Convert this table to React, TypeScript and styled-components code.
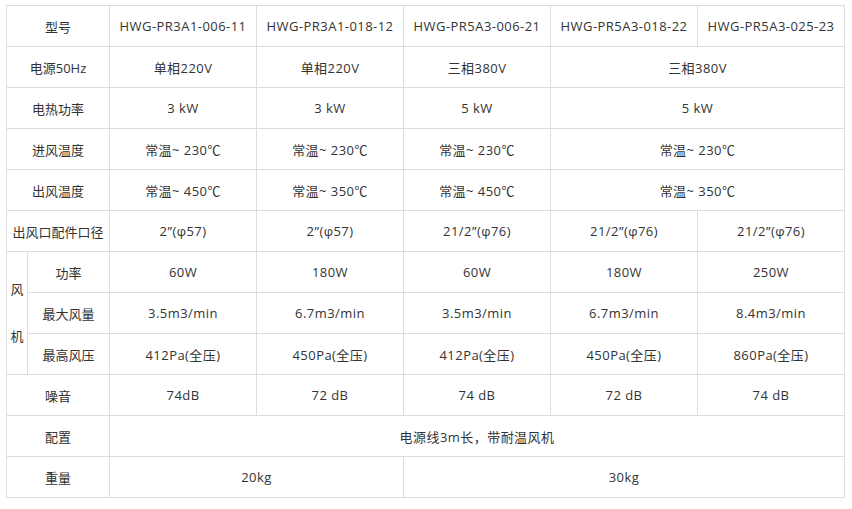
import React from "react";
import styled, { createGlobalStyle } from "styled-components";

const Global = createGlobalStyle`
  html, body { margin: 0; padding: 0; background: #fff; }
  body { font-family: "Open Sans", "Noto Sans CJK SC", sans-serif; }
`;

const Wrap = styled.div`
  padding: 5px 0 0 6px;
`;

const Table = styled.table`
  border-collapse: collapse;
  table-layout: fixed;
  width: 838px;
  font-size: 13px;
  color: #333;
  font-family: "Open Sans", "Noto Sans CJK SC", sans-serif;
`;

const Col = styled.col<{ $w: number }>`
  width: ${(p) => p.$w}px;
`;

const Row = styled.tr`
  height: 41px;
`;

const Cell = styled.td<{ $data?: boolean }>`
  border: 1px solid #ddd;
  text-align: center;
  vertical-align: middle;
  padding: 0;
  white-space: nowrap;
  letter-spacing: ${(p) => (p.$data ? "0.45px" : "0")};
`;

const VerticalLabel = styled.span`
  display: block;
  line-height: 47px;
`;

type R = { label: string; cells: { v: string; span?: number }[] };

const colWidths = [21, 82, 147, 147, 147, 147, 147];

const rows: R[] = [
  { label: "型号", cells: [{ v: "HWG-PR3A1-006-11" }, { v: "HWG-PR3A1-018-12" }, { v: "HWG-PR5A3-006-21" }, { v: "HWG-PR5A3-018-22" }, { v: "HWG-PR5A3-025-23" }] },
  { label: "电源50Hz", cells: [{ v: "单相220V" }, { v: "单相220V" }, { v: "三相380V" }, { v: "三相380V", span: 2 }] },
  { label: "电热功率", cells: [{ v: "3 kW" }, { v: "3 kW" }, { v: "5 kW" }, { v: "5 kW", span: 2 }] },
  { label: "进风温度", cells: [{ v: "常温~ 230℃" }, { v: "常温~ 230℃" }, { v: "常温~ 230℃" }, { v: "常温~ 230℃", span: 2 }] },
  { label: "出风温度", cells: [{ v: "常温~ 450℃" }, { v: "常温~ 350℃" }, { v: "常温~ 450℃" }, { v: "常温~ 350℃", span: 2 }] },
  { label: "出风口配件口径", cells: [{ v: "2\u201D(φ57)" }, { v: "2\u201D(φ57)" }, { v: "21/2\u201D(φ76)" }, { v: "21/2\u201D(φ76)" }, { v: "21/2\u201D(φ76)" }] },
];

const fanRows: R[] = [
  { label: "功率", cells: [{ v: "60W" }, { v: "180W" }, { v: "60W" }, { v: "180W" }, { v: "250W" }] },
  { label: "最大风量", cells: [{ v: "3.5m3/min" }, { v: "6.7m3/min" }, { v: "3.5m3/min" }, { v: "6.7m3/min" }, { v: "8.4m3/min" }] },
  { label: "最高风压", cells: [{ v: "412Pa(全压)" }, { v: "450Pa(全压)" }, { v: "412Pa(全压)" }, { v: "450Pa(全压)" }, { v: "860Pa(全压)" }] },
];

const tailRows: R[] = [
  { label: "噪音", cells: [{ v: "74dB" }, { v: "72 dB" }, { v: "74 dB" }, { v: "72 dB" }, { v: "74 dB" }] },
  { label: "配置", cells: [{ v: "电源线3m长，带耐温风机", span: 5 }] },
  { label: "重量", cells: [{ v: "20kg", span: 2 }, { v: "30kg", span: 3 }] },
];

const renderCells = (r: R) =>
  r.cells.map((c, i) => (
    <Cell key={i} colSpan={c.span} $data>
      {c.v}
    </Cell>
  ));

export default function App() {
  return (
    <>
      <Global />
      <Wrap>
        <Table>
          <colgroup>
            {colWidths.map((w, i) => (
              <Col key={i} $w={w} />
            ))}
          </colgroup>
          <tbody>
            {rows.map((r) => (
              <Row key={r.label}>
                <Cell colSpan={2}>{r.label}</Cell>
                {renderCells(r)}
              </Row>
            ))}
            {fanRows.map((r, i) => (
              <Row key={r.label}>
                {i === 0 && (
                  <Cell rowSpan={3}>
                    <VerticalLabel>风</VerticalLabel>
                    <VerticalLabel>机</VerticalLabel>
                  </Cell>
                )}
                <Cell>{r.label}</Cell>
                {renderCells(r)}
              </Row>
            ))}
            {tailRows.map((r) => (
              <Row key={r.label}>
                <Cell colSpan={2}>{r.label}</Cell>
                {renderCells(r)}
              </Row>
            ))}
          </tbody>
        </Table>
      </Wrap>
    </>
  );
}
